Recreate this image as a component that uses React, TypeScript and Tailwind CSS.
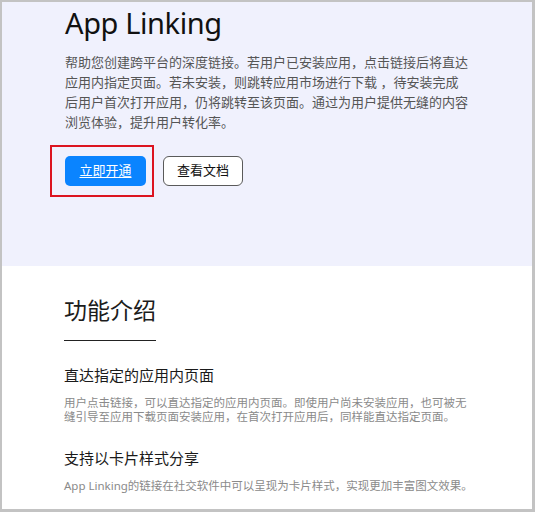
const font = { fontFamily: '"Noto Sans", "Noto Sans CJK SC", sans-serif' };

const features = [
  {
    title: "直达指定的应用内页面",
    lines: [
      "用户点击链接，可以直达指定的应用内页面。即使用户尚未安装应用，也可被无",
      "缝引导至应用下载页面安装应用，在首次打开应用后，同样能直达指定页面。",
    ],
  },
  {
    title: "支持以卡片样式分享",
    lines: ["App Linking的链接在社交软件中可以呈现为卡片样式，实现更加丰富图文效果。"],
  },
];

export default function App() {
  return (
    <div
      className="w-[535px] h-[512px] overflow-hidden bg-white border-l-2 border-t-2 border-r-[3px] border-b-[3px] border-[#c3c3c3]"
      style={font}
    >
      {/* hero */}
      <section className="relative h-[264px] bg-[#f0f1fd] pl-[63px]">
        <h1 className="pt-[3px] text-[29px] leading-[36px] font-normal text-[#111111] tracking-[-0.4px]">
          App Linking
        </h1>
        <p className="mt-[11px] text-[13px] leading-[20px] text-[#555555]">
          帮助您创建跨平台的深度链接。若用户已安装应用，点击链接后将直达
          <br />
          应用内指定页面。若未安装，则跳转应用市场进行下载 ，待安装完成
          <br />
          后用户首次打开应用，仍将跳转至该页面。通过为用户提供无缝的内容
          <br />
          浏览体验，提升用户转化率。
        </p>
        <div className="mt-[24px] flex gap-[17px]">
          <a className="flex h-[30px] w-[81px] items-center justify-center rounded-[5px] bg-[#0a84ff] text-[13px] text-white underline underline-offset-2">
            立即开通
          </a>
          <button className="flex h-[30px] w-[80px] items-center justify-center rounded-[6px] border border-[#5a5a5a] bg-white text-[13px] text-[#111111]">
            查看文档
          </button>
        </div>
        {/* annotation box */}
        <div className="absolute left-[48px] top-[143px] h-[52px] w-[104px] border-2 border-[#dc1420]" />
      </section>

      {/* features */}
      <section className="pl-[62px] pt-[29px]">
        <h2 className="text-[23px] leading-[30px] text-[#1c1c1c]">功能介绍</h2>
        <div className="mt-[15px] h-px w-[92px] bg-[#222222]" />
        <div className="mt-[23px] flex flex-col gap-[23px]">
          {features.map((f) => (
            <div key={f.title}>
              <h3 className="text-[15px] leading-[22px] text-[#1a1a1a]">{f.title}</h3>
              <p className="mt-[10px] text-[11.5px] leading-[14px] text-[#8a8a8a]">
                {f.lines.map((l, i) => (
                  <span key={i} className="block whitespace-nowrap">
                    {l}
                  </span>
                ))}
              </p>
            </div>
          ))}
        </div>
      </section>
    </div>
  );
}
